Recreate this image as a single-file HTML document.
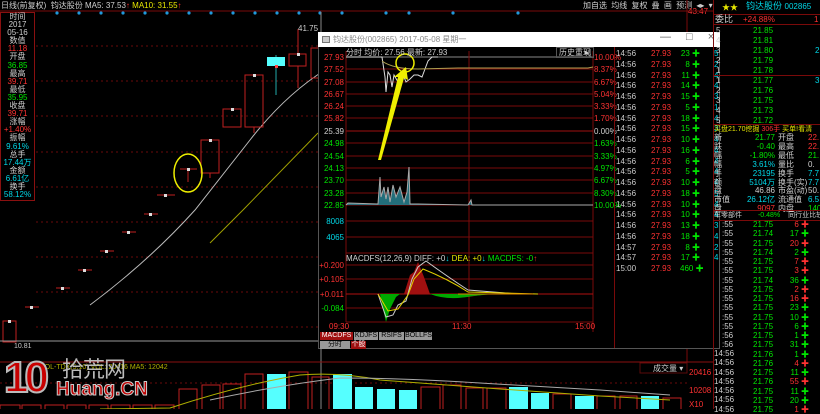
<!DOCTYPE html><html><head><meta charset="utf-8"><style>
*{margin:0;padding:0;box-sizing:border-box}
body{width:820px;height:409px;background:#000;overflow:hidden;position:relative;font-family:"Liberation Sans","Noto Sans CJK SC",sans-serif;font-size:8px;color:#c0c0c0}
.a{position:absolute;white-space:nowrap;line-height:9px}
.r{color:#ff3232}.g{color:#00e600}.c{color:#00d8e8}.w{color:#d0d0d0}.y{color:#e8e800}
.info{position:absolute;left:0;top:12px;width:35px;height:189px;border:1px solid #8a1010;text-align:center}
.info div{height:8.1px;line-height:8px;font-size:8px}
.tb div{position:absolute;height:11px;line-height:11px}
</style></head><body>
<!-- top bar -->
<div class="a w" style="left:1px;top:1px">日线(前复权) &nbsp;钧达股份 <span class="w">MA5: 37.53</span><span class="r">↑</span> <span class="y">MA10: 31.55</span><span class="r">↑</span></div>
<div class="a w" style="left:583px;top:1px;word-spacing:2px">加自选 均线 复权 叠 画 预测 ◂▸ ▾</div>
<div class="a r" style="left:688px;top:7px">43.47</div>
<svg class="a" style="left:0;top:0" width="713" height="409">
<line x1="687" y1="0" x2="687" y2="362" stroke="#7a0a0a"/>
<line x1="0" y1="11" x2="713" y2="11" stroke="#7a0a0a"/>
<g stroke="#6a0a0a" stroke-dasharray="2,3">
<line x1="36" y1="46" x2="687" y2="46"/><line x1="36" y1="81" x2="687" y2="81"/><line x1="36" y1="116" x2="687" y2="116"/><line x1="36" y1="152" x2="687" y2="152"/><line x1="36" y1="187" x2="687" y2="187"/><line x1="36" y1="222" x2="687" y2="222"/><line x1="36" y1="257" x2="687" y2="257"/><line x1="36" y1="292" x2="687" y2="292"/><line x1="36" y1="327" x2="687" y2="327"/>
<line x1="0" y1="383" x2="687" y2="383"/>
</g>
<g fill="#1e9adc"><circle cx="57" cy="13" r="1.6"/><circle cx="79" cy="13" r="1.6"/><circle cx="101" cy="13" r="1.6"/><circle cx="123" cy="13" r="1.6"/><circle cx="145" cy="13" r="1.6"/><circle cx="167" cy="13" r="1.6"/><circle cx="189" cy="13" r="1.6"/><circle cx="211" cy="13" r="1.6"/><circle cx="233" cy="13" r="1.6"/><circle cx="255" cy="13" r="1.6"/><circle cx="277" cy="13" r="1.6"/><circle cx="299" cy="13" r="1.6"/><circle cx="320" cy="13" r="1.6"/><circle cx="342" cy="13" r="1.6"/><circle cx="386" cy="13" r="1.6"/><circle cx="409" cy="13" r="1.6"/><circle cx="453" cy="13" r="1.6"/><circle cx="518" cy="13" r="1.6"/></g>
<!-- MA lines -->
<path d="M90 305 Q150 260 195 210 L250 140 Q285 95 325 70" stroke="#bbb" fill="none"/>
<path d="M210 243 L243 210 L318 133" stroke="#a0a000" fill="none"/>
<!-- candles -->
<g stroke="#c02020" fill="none">
<path d="M25 307h14M56 288h14M78 270h14M100 251h14M122 232h14M144 214h14M157 195h18M180 169h17M188 169v13"/>
<rect x="201" y="140" width="18" height="33"/><line x1="210" y1="173" x2="210" y2="178"/>
<rect x="223" y="109" width="18" height="18"/>
<rect x="245" y="75" width="18" height="52"/><line x1="254" y1="127" x2="254" y2="133"/>
<rect x="289" y="54" width="17" height="12"/><line x1="298" y1="29" x2="298" y2="54"/><line x1="298" y1="66" x2="298" y2="88"/>
<rect x="311" y="48" width="10" height="30"/>
<rect x="3" y="321" width="13" height="21"/>
</g>
<rect x="267" y="57" width="18" height="9" fill="#5ff"/><line x1="276" y1="66" x2="276" y2="95" stroke="#2aa"/><line x1="276" y1="55" x2="276" y2="57" stroke="#2aa"/>
<g fill="#ddd"><rect x="30" y="306" width="3" height="3"/><rect x="61" y="287" width="3" height="3"/><rect x="83" y="269" width="3" height="3"/><rect x="105" y="250" width="3" height="3"/><rect x="127" y="231" width="3" height="3"/><rect x="149" y="213" width="3" height="3"/><rect x="164" y="194" width="3" height="3"/><rect x="187" y="168" width="3" height="3"/><rect x="209" y="139" width="3" height="3"/><rect x="231" y="108" width="3" height="3"/><rect x="253" y="74" width="3" height="3"/><rect x="297" y="53" width="3" height="3"/><rect x="8" y="320" width="3" height="3"/></g>
<rect x="275" y="65" width="3" height="3" fill="#f44"/>
<ellipse cx="188" cy="173" rx="14" ry="19" stroke="#ee0" stroke-width="1.5" fill="none"/>
<text x="298" y="31" fill="#ccc" font-size="8" font-family="Liberation Sans">41.75</text>
<text x="14" y="348" fill="#ccc" font-size="7" font-family="Liberation Sans">10.81</text>
<line x1="0" y1="341" x2="320" y2="341" stroke="#999"/>
<line x1="321" y1="12" x2="321" y2="409" stroke="#888"/>
<!-- volume -->
<line x1="0" y1="362" x2="713" y2="362" stroke="#8a1010"/>
<g stroke="#c02020" fill="none">
<rect x="0" y="405" width="20" height="6"/><rect x="22" y="405" width="19" height="6"/><rect x="45" y="405" width="19" height="6"/><rect x="67" y="405" width="19" height="6"/><rect x="89" y="405" width="19" height="6"/><rect x="111" y="405" width="19" height="6"/><rect x="133" y="405" width="19" height="6"/><rect x="155" y="405" width="19" height="6"/>
<rect x="179" y="389" width="18" height="22"/><rect x="202" y="385" width="18" height="26"/><rect x="223" y="384" width="18" height="26"/><rect x="245" y="374" width="18" height="36"/><rect x="289" y="372" width="19" height="38"/><rect x="312" y="377" width="17" height="33"/><rect x="421" y="387" width="19" height="23"/><rect x="443" y="385" width="18" height="25"/><rect x="466" y="388" width="17" height="22"/><rect x="487" y="388" width="19" height="22"/><rect x="553" y="394" width="18" height="16"/><rect x="597" y="396" width="18" height="14"/><rect x="620" y="396" width="17" height="14"/><rect x="663" y="398" width="18" height="12"/>
</g>
<g fill="#5ff"><rect x="267" y="374" width="19" height="36"/><rect x="333" y="374" width="19" height="36"/><rect x="355" y="387" width="18" height="23"/><rect x="377" y="389" width="18" height="21"/><rect x="399" y="390" width="18" height="20"/><rect x="509" y="387" width="19" height="23"/><rect x="531" y="393" width="18" height="17"/><rect x="575" y="396" width="19" height="14"/><rect x="641" y="396" width="18" height="14"/></g>
<path d="M100 409 L170 408 Q240 385 300 375 Q340 372 380 380 L500 389 L600 396 L670 400" stroke="#b0b000" fill="none"/>
<path d="M210 400 Q280 385 340 378 Q400 378 480 383 L600 390 L670 395" stroke="#aaa" fill="none"/>
<rect x="640" y="363" width="47" height="10" fill="#000" stroke="#5a0a0a"/>
<text x="653" y="371" fill="#ccc" font-size="8">成交量 ▾</text>
<text x="689" y="375" fill="#ff3232" font-size="8" font-family="Liberation Sans">20416</text>
<text x="689" y="393" fill="#ff3232" font-size="8" font-family="Liberation Sans">10208</text>
<text x="689" y="407" fill="#ff3232" font-size="8" font-family="Liberation Sans">X10</text>
<text x="40" y="369" fill="#b0b000" font-size="7" font-family="Liberation Sans">VOL-TDX(5,10) VOL: 20416 MA5: 12042</text>
</svg>
<div class="info">
<div class="w">时间</div><div class="w">2017</div><div class="w">05-16</div><div class="w">数值</div><div class="r">11.18</div><div class="w">开盘</div><div class="g">36.85</div><div class="w">最高</div><div class="r">39.71</div><div class="w">最低</div><div class="g">35.95</div><div class="w">收盘</div><div class="r">39.71</div><div class="w">涨幅</div><div class="r">+1.40%</div><div class="w">振幅</div><div class="c">9.61%</div><div class="w">总手</div><div class="c">17.44万</div><div class="w">金额</div><div class="c">6.61亿</div><div class="w">换手</div><div class="c">58.12%</div>
</div>
<!-- logo -->
<div class="a" style="left:4px;top:356px;font:bold 44px/44px 'Liberation Sans',sans-serif;color:#c80000;-webkit-text-stroke:2px #bbb;letter-spacing:-4px">10</div>
<div class="a" style="left:62px;top:356px;font:22px/24px 'Noto Sans CJK SC',sans-serif;color:#bbb;letter-spacing:-1px">拾荒网</div>
<div class="a" style="left:56px;top:380px;font:bold 19px/20px 'Liberation Sans',sans-serif;color:#c00000;-webkit-text-stroke:1px #ccc">Huang.CN</div>
<!-- popup -->
<div class="a" style="left:318px;top:32px;width:402px;height:317px;background:#000;border:1px solid #555"></div>
<div class="a" style="left:318px;top:32px;width:402px;height:15px;background:#fff"></div>
<div class="a" style="left:322px;top:36px;width:8px;height:7px;border:1px solid #777;background:#ccc"></div>
<div class="a" style="left:333px;top:35px;color:#888">钧达股份(002865) 2017-05-08 星期一</div>
<div class="a" style="left:660px;top:33px;color:#666;font-size:11px;word-spacing:12px">— □ ×</div>
<svg class="a" style="left:318px;top:47px" width="300" height="302">
<g stroke="#7a0a0a"><line x1="28" y1="10" x2="275" y2="10" stroke="#888"/>
<line x1="28" y1="22" x2="275" y2="22"/><line x1="28" y1="35" x2="275" y2="35"/><line x1="28" y1="47" x2="275" y2="47"/><line x1="28" y1="59" x2="275" y2="59"/><line x1="28" y1="71" x2="275" y2="71"/><line x1="28" y1="84" x2="275" y2="84" stroke="#a01010"/><line x1="28" y1="96" x2="275" y2="96"/><line x1="28" y1="109" x2="275" y2="109"/><line x1="28" y1="121" x2="275" y2="121"/><line x1="28" y1="133" x2="275" y2="133"/><line x1="28" y1="146" x2="275" y2="146"/><line x1="28" y1="158" x2="275" y2="158"/>
<line x1="28" y1="174" x2="275" y2="174"/><line x1="28" y1="190" x2="275" y2="190"/><line x1="28" y1="206" x2="275" y2="206"/>
<line x1="28" y1="218" x2="275" y2="218"/><line x1="28" y1="232" x2="275" y2="232"/><line x1="28" y1="261" x2="275" y2="261"/><line x1="28" y1="275" x2="275" y2="275"/>
<line x1="28" y1="4" x2="28" y2="275"/><line x1="151" y1="4" x2="151" y2="275"/><line x1="275" y1="4" x2="275" y2="285"/>
<line x1="28" y1="247" x2="275" y2="247" stroke="#b01010"/></g>
<path d="M28 10 L64 10 L67 30 L68 45 L70 25 L72 28 L74 40 L76 28 L80 35 L84 25 L88 35 L92 32 L96 28 L100 28 L104 30 L107 22 L110 14 L114 10 L120 10" stroke="#ddd" fill="none"/>
<path d="M64 14 Q75 22 100 22 L140 21 L270 21 L275 20" stroke="#b0a050" fill="none"/>
<ellipse cx="87" cy="16" rx="9" ry="9" stroke="#ee0" stroke-width="1.5" fill="none"/>
<path d="M60 113 L80 30 L76 30 L88 20 L90 33 L86 31 L63 113Z" fill="#ee0"/>
<path d="M28 158 L30 156 L60 157 L62 130 L63 150 L66 140 L68 152 L70 140 L72 155 L75 138 L78 150 L82 140 L86 155 L89 145 L91 120 L92 157 L100 157 L150 158 L153 153 L154 158 L275 158" stroke="#aaa" fill="#2a8a9a" fill-opacity=".8"/>
<path d="M62 247 L65 262 L68 275 L72 262 L78 250 L82 247Z" fill="#0a0"/>
<path d="M86 247 L92 228 L96 225 L100 215 L106 230 L112 247Z M112 247 Q130 252 150 250 L170 247Z" fill="#a01010"/>
<path d="M112 247 Q130 254 155 249 L175 247Z" fill="#0a0"/>
<path d="M60 247 L68 270 L75 268 L80 258 L88 254 L94 232 L100 220 L108 214 Q130 230 150 243 L200 247" stroke="#ccc" fill="none"/>
<path d="M60 247 L70 264 L80 262 L90 248 L96 232 L105 222 Q130 232 150 245 L220 247" stroke="#e0d000" fill="none"/>
<line x1="140" y1="247" x2="215" y2="247" stroke="#e08000"/>
</svg>
<div class="a w" style="left:346px;top:48px">分时 均价: 27.56 最新: 27.93</div>
<div class="a w" style="left:556px;top:47px;border:1px solid #555;padding:0 2px">历史重现</div>
<div class="a w" style="left:585px;top:48px">▸|</div>
<div class="tb" style="position:absolute;left:318px;top:52px;width:28px;text-align:right">
<div class="r" style="top:0;right:2px">27.93</div><div class="r" style="top:12px;right:2px">27.52</div><div class="r" style="top:25px;right:2px">27.08</div><div class="r" style="top:37px;right:2px">26.67</div><div class="r" style="top:49px;right:2px">26.24</div><div class="r" style="top:61px;right:2px">25.82</div><div class="w" style="top:74px;right:2px">25.39</div><div class="g" style="top:86px;right:2px">24.98</div><div class="g" style="top:99px;right:2px">24.54</div><div class="g" style="top:111px;right:2px">24.13</div><div class="g" style="top:123px;right:2px">23.70</div><div class="g" style="top:136px;right:2px">23.28</div><div class="g" style="top:148px;right:2px">22.85</div><div class="c" style="top:164px;right:2px">8008</div><div class="c" style="top:180px;right:2px">4065</div>
<div class="r" style="top:208px;right:2px">+0.200</div><div class="r" style="top:222px;right:2px">+0.105</div><div class="r" style="top:237px;right:2px">+0.011</div><div class="g" style="top:251px;right:2px">-0.084</div>
</div>
<div class="tb" style="position:absolute;left:594px;top:52px">
<div class="r" style="top:0">10.00%</div><div class="r" style="top:12px">8.37%</div><div class="r" style="top:25px">6.67%</div><div class="r" style="top:37px">5.04%</div><div class="r" style="top:49px">3.33%</div><div class="r" style="top:61px">1.70%</div><div class="w" style="top:74px">0.00%</div><div class="g" style="top:86px">1.63%</div><div class="g" style="top:99px">3.33%</div><div class="g" style="top:111px">4.97%</div><div class="g" style="top:123px">6.67%</div><div class="g" style="top:136px">8.30%</div><div class="g" style="top:148px">10.00%</div>
</div>
<div class="a w" style="left:346px;top:254px"><span class="w">MACDFS(12,26,9) DIFF: +0</span><span class="c">↓</span> <span class="y">DEA: +0</span><span class="c">↓</span> <span class="g">MACDFS: -0</span><span class="r">↑</span></div>
<div class="a r" style="left:329px;top:322px">09:30</div><div class="a r" style="left:452px;top:322px">11:30</div><div class="a r" style="left:575px;top:322px">15:00</div>
<div class="a" style="left:320px;top:332px;background:#a01010;color:#fff;width:33px;height:8px;line-height:8px;text-align:center;font-size:7px">MACDFS</div>
<div class="a" style="left:354px;top:332px;background:#999;color:#000;width:24px;height:8px;line-height:8px;text-align:center;font-size:7px">KDJFS</div>
<div class="a" style="left:379px;top:332px;background:#999;color:#000;width:25px;height:8px;line-height:8px;text-align:center;font-size:7px">RSIFS</div>
<div class="a" style="left:405px;top:332px;background:#999;color:#000;width:27px;height:8px;line-height:8px;text-align:center;font-size:7px">BOLLFS</div>
<div class="a" style="left:320px;top:341px;background:#999;color:#000;width:30px;height:8px;line-height:8px;text-align:center;font-size:7px">分时</div>
<div class="a" style="left:351px;top:341px;background:#a01010;color:#fff;width:15px;height:8px;line-height:8px;text-align:center;font-size:7px">个股</div>
<div class="a" style="left:614px;top:47px;width:1px;height:301px;background:#7a0a0a"></div>
<div class="a" style="left:616px;top:49px;line-height:10.75px;color:#ccc">14:56<br>14:56<br>14:56<br>14:56<br>14:56<br>14:56<br>14:56<br>14:56<br>14:56<br>14:56<br>14:56<br>14:56<br>14:56<br>14:56<br>14:56<br>14:56<br>14:56<br>14:56<br>14:57<br>14:57<br>15:00</div>
<div class="a r" style="left:651px;top:49px;line-height:10.75px">27.93<br>27.93<br>27.93<br>27.93<br>27.93<br>27.93<br>27.93<br>27.93<br>27.93<br>27.93<br>27.93<br>27.93<br>27.93<br>27.93<br>27.93<br>27.93<br>27.93<br>27.93<br>27.93<br>27.93<br>27.93</div>
<div class="a g" style="left:680px;top:49px;width:20px;text-align:right;line-height:10.75px">23 ✚<br>8 ✚<br>11 ✚<br>14 ✚<br>15 ✚<br>5 ✚<br>18 ✚<br>15 ✚<br>10 ✚<br>16 ✚<br>6 ✚<br>5 ✚<br>10 ✚<br>18 ✚<br>10 ✚<br>10 ✚<br>13 ✚<br>18 ✚<br>8 ✚<br>17 ✚<br>460 ✚</div>
<div class="a c" style="left:714px;top:49px;line-height:10.75px">5<br>2<br>4<br>4<br>3<br>1<br>4<br>3<br>4<br>4<br>4<br>4<br>4<br>5<br>4<br>4<br>3<br>4<br>2<br>4<br></div>
<!-- right panel -->
<div class="a" style="left:713px;top:0;width:1px;height:409px;background:#7a0a0a"></div>
<div class="a y" style="left:722px;top:3px">★★</div>
<div class="a c" style="left:746px;top:2px;font-size:9px">钧达股份 <span style="font-size:8px">002865</span></div>
<div class="a" style="left:713px;top:14px;width:107px;height:1px;background:#7a0a0a"></div>
<div class="a w" style="left:715px;top:15px;font-size:9px">委比</div><div class="a r" style="left:743px;top:15px">+24.88%</div><div class="a r" style="left:814px;top:15px">1</div>
<div class="a" style="left:713px;top:24px;width:107px;height:1px;background:#7a0a0a"></div>
<div class="a w" style="left:716px;top:26px;line-height:10px">5<br>4<br>3<br>2<br>1</div>
<div class="a g" style="left:753px;top:26px;line-height:10px">21.85<br>21.81<br>21.80<br>21.79<br>21.78</div>
<div class="a c" style="left:815px;top:46px">2</div>
<div class="a" style="left:713px;top:75px;width:107px;height:1px;background:#7a0a0a"></div>
<div class="a w" style="left:716px;top:76px;line-height:10px">1<br>2<br>3<br>4<br>5</div>
<div class="a g" style="left:753px;top:76px;line-height:10px">21.77<br>21.76<br>21.75<br>21.73<br>21.72</div>
<div class="a c" style="left:815px;top:76px">3</div>
<div class="a" style="left:713px;top:124px;width:107px;height:1px;background:#7a0a0a"></div>
<div class="a" style="left:714px;top:125px;font-size:7px"><span class="y">买盘21.70挖掘</span> <span class="r">306手</span> <span class="y">买单!看清</span></div>
<div class="a w" style="left:714px;top:134px;line-height:8.9px">新<br>跌<br>幅<br>幅<br>手<br>额<br>盘<br>市值<br>盘</div>
<div class="a" style="left:735px;top:134px;width:40px;text-align:right;line-height:8.9px"><span class="g">21.77</span><br><span class="g">-0.40</span><br><span class="g">-1.80%</span><br><span class="c">3.61%</span><br><span class="c">23195</span><br><span class="c">5104万</span><br><span class="w">46.86</span><br><span class="c">26.12亿</span><br><span class="r">9097</span></div>
<div class="a w" style="left:778px;top:134px;line-height:8.9px">开盘<br>最高<br>最低<br>量比<br>换手<br>换手(实)<br>市盈(动)<br>流通值<br>内盘</div>
<div class="a" style="left:808px;top:134px;line-height:8.9px"><span class="r">22.</span><br><span class="r">22.</span><br><span class="g">21.</span><br><span class="w">0.</span><br><span class="c">7.7</span><br><span class="c">7.7</span><br><span class="w">50.</span><br><span class="c">6.5</span><br><span class="g">140</span></div>
<div class="a" style="left:713px;top:210px;width:107px;height:1px;background:#7a0a0a"></div>
<div class="a w" style="left:714px;top:211px;font-size:7px">车零部件 <span class="g" style="margin-left:14px">-0.48%</span> <span style="margin-left:6px">同行业比较</span></div>
<div class="a" style="left:713px;top:220px;width:107px;height:1px;background:#7a0a0a"></div>
<div class="a w" style="left:722px;top:220px;line-height:9.25px">:55<br>:55<br>:55<br>:55<br>:55<br>:55<br>:55<br>:55<br>:55<br>:55<br>:55<br>:55<br>:56<br>:56</div>
<div class="a w" style="left:714px;top:349px;line-height:9.25px">14:56<br>14:56<br>14:56<br>14:56<br>14:56<br>14:56<br>14:56</div>
<div class="a g" style="left:753px;top:220px;line-height:9.25px">21.75<br>21.74<br>21.75<br>21.74<br>21.75<br>21.75<br>21.74<br>21.75<br>21.75<br>21.75<br>21.75<br>21.75<br>21.75<br>21.75<br>21.76<br>21.76<br>21.75<br>21.76<br>21.75<br>21.75<br>21.75</div>
<div class="a" style="left:785px;top:220px;width:24px;text-align:right;line-height:9.25px"><span class="r">6 ✚</span><br><span class="g">17 ✚</span><br><span class="r">20 ✚</span><br><span class="g">2 ✚</span><br><span class="r">7 ✚</span><br><span class="r">3 ✚</span><br><span class="g">36 ✚</span><br><span class="r">2 ✚</span><br><span class="r">16 ✚</span><br><span class="g">23 ✚</span><br><span class="g">10 ✚</span><br><span class="g">6 ✚</span><br><span class="g">1 ✚</span><br><span class="g">31 ✚</span><br><span class="g">1 ✚</span><br><span class="r">4 ✚</span><br><span class="g">11 ✚</span><br><span class="r">55 ✚</span><br><span class="g">11 ✚</span><br><span class="g">20 ✚</span><br><span class="r">1 ✚</span></div>
</body></html>
